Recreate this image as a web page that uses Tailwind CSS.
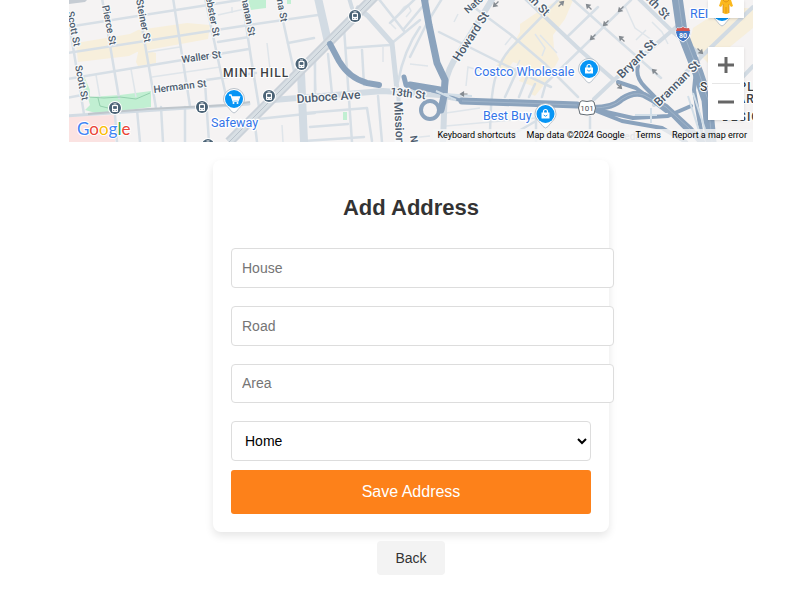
<!DOCTYPE html>
<html lang="en">
<head>
<meta charset="utf-8">
<meta name="viewport" content="width=device-width, initial-scale=1">
<title>Add Address</title>
<script src="https://cdn.jsdelivr.net/npm/@tailwindcss/browser@4"></script>
</head>
<body class="bg-white font-['Liberation_Sans',Arial,sans-serif]">
<main class="pl-[69px] pr-11">
  <section aria-label="Map" class="relative h-[142px] overflow-hidden bg-[#f5f3f3] font-[Roboto,sans-serif]">
    <svg class="block h-full w-full" viewBox="69 0 684 142" preserveAspectRatio="xMidYMid slice" fill="none">
      <defs>
        <g id="transit">
          <circle r="7" fill="#fff"/><circle r="6" fill="#4b6376"/>
          <path d="M-2.500-2.500h5v6h-5zM-1.500-4h3" stroke="#fff" stroke-width="1" fill="#fff"/>
          <path d="M-1.500-1.500h3v2h-3zM-1.800 2.500h1M.8 2.500h1" stroke="#4b6376" stroke-width=".8" fill="#4b6376"/>
        </g>
        <g id="pin">
          <path d="M0-10.500a10.500 10.500 0 0 1 10.500 10.500c0 5-5 8-8 12.500q-2.500 3-5 0c-3-4.500-8-7.500-8-12.500a10.500 10.500 0 0 1 10.500-10.500z" fill="#fff" stroke="#aab4be" stroke-width=".8"/>
          <circle r="9" fill="#0795f5"/>
        </g>
        <g id="bag">
          <path d="M-4-1.500h8v6h-8z" fill="#fff"/><path d="M-2-1v-1.500a2 2 0 0 1 4 0v1.500" stroke="#fff" stroke-width="1.200"/>
          <path d="M-1.800 1q1.800 2.500 3.600 0" stroke="#0795f5" stroke-width=".9"/>
        </g>
        <path id="arrow" d="M-3.500 0h7M-3.500 0l3-2v4z" stroke="#858b91" fill="#858b91" stroke-width="1.200"/>
      </defs>
      <!-- commercial areas, parks and hospital -->
      <g fill="#f7efdc">
        <path d="M76 43l54-9 8-4 49-7 23 2-2 14-71 13-8 4-51 6z"/>
        <path d="M139 48l17 5v10l-18 3-2-4z"/>
        <path d="M520 24l25-17 18-9h11l-9 21-12 16 1 14 5 10-8 15-8 12-8 10-4-2 4-7-16-6 10-13-16-6-9 12-8-8 18-23 6-11z"/>
        <path d="M693 28l31-20h29v20l-44 36-20-20z"/>
      </g>
      <g fill="#c1efd2">
        <path d="M84 76l6 14v7l15-1 15-1 31-4v16l-52 7-14-4 5-5-2-7-5-2z"/>
        <path d="M248 0h18v8l-15 2zM287 0h4v4h-4zM343 112h4v8h-4z"/>
      </g>
      <path d="M69 117l45-2 1 27H69z" fill="#fbe3e2"/>
      <path d="M69 0h18l-2 2-16 2z" fill="#c6ccd3"/>
      <!-- minor lanes -->
      <g stroke="#dfe5ea" stroke-width="1.500">
        <path d="M96 75l4 23M131 69l5 28M152 77l68-10M148 52l32-5M218 15l31-7M232 7v6"/>
        <path d="M267 43l3 26M282 125l1 17M314 60l2 30M383 47v15M398 15l6-8 4-2 3 6-5 6M391 24l5 5"/>
        <path d="M466 86l2-19 13 4M505 45l8-10M535 34l10 14-3 8M520 60l-6 12M410 64l18 2M458 14l-4 8M540 35l17 18"/>
        <path d="M625 6l10 22 17 12M652 22l10 10 6 12M636 40l10-10M446 113l34-5M446 126l90-8M410 138l20-2"/>
      </g>
      <!-- streets -->
      <g stroke="#d7dfe6" stroke-width="2.500" stroke-linecap="round" stroke-linejoin="round">
        <path d="M67 27L176 10l70-11M67 53l182-28 69-10M67 79l85-14 97-16M67 98l15-3M206 80l50-7M218 42l31-5M288 43l26-5"/>
        <path d="M67 10l17 104M102-2l17 100M137-2l19 110M173-2l17 108M205-2l17 80 5 22M205 83l4 59M137 110l3 32M115 115l2 27M161 107l2 35M185 107v35"/>
        <path d="M242-2l9 60 9 55M278-2l16 73M315 55v38M328 54l4 40M362 50l2 35M344 28l8 114M347 48l43-3"/>
        <path d="M258 119l57-6M306 113l61-5 5 33M310 127l38-3M304 141l60-4M378 96l4 46M255 125l2 17"/>
        <path d="M392 43l28-23M378-2l26 33M403 30l25-30M390 23l26-25M420 27q-16 23-22 55M410 57l17-34 16-26"/>
        <path d="M475 8l35 26 34 29 34 34M439 32l62 31 50 24M571-2l90 80M560-2l-50 51q-9 10-12 22-8 15-8 71"/>
        <path d="M631 0l-47 46-38 37-4 14M598 7l-32 31M505 97l12-26M519 97l8-20M529 97l6-13M590 117v25M536 112v30M510 136l26-15"/>
      </g>
      <g stroke="#d2dbe3" stroke-width="4" stroke-linecap="round" stroke-linejoin="round">
        <path d="M524-3l57 54 33 29M681 23l-67 57-20 19M638-2l36 35 27 22M753 7l-52 50-47 48"/>
        <path d="M67 116l182-12" stroke-width="3"/>
        <path d="M273 100l110-9 57 4 20 4" stroke-width="6"/>
        <path d="M358 8l10 8 24 27 5 47" stroke-width="5"/><path d="M398 90l3 52"/>
        <path d="M318-2l10 44M301 73l3 69" stroke-width="8"/>
        <path d="M493-2l-34 55q-12 16-14 33l-2 56" stroke-width="6"/>
        <path d="M349-2l3 10M753 66l-32 34"/>
      </g>
      <path d="M379-8L229 142" stroke="#cbd2d9" stroke-width="10"/><path d="M379-8L229 142" stroke="#d8dfe4" stroke-width="6"/>
      <path d="M379-8L229 142" stroke="#b9c2cb" stroke-width="1"/>
      <path d="M250 102l-22 3-80 4-60 5" stroke="#bfc6cc" stroke-width="2"/>
      <!-- freeways -->
      <g stroke="#8ba3bd" stroke-linecap="round" stroke-linejoin="round">
        <path d="M330 44l9 17q10 17 28 22l12 2" stroke-width="6"/><path d="M404 77l2 8 10 3" stroke-width="5"/>
        <path d="M424-3l5 28 8 38 8 17-1 16-3 14" stroke-width="7"/>
        <path d="M410 85l30 5M462 101l115 4" stroke-width="7"/><circle cx="430" cy="110" r="9" stroke-width="4"/>
        <path d="M410 85l30 8 22 8" stroke-width="3"/>
        <path d="M593 108q20 0 29-9 12-8 22-4l22 12 24 22 12 14" stroke-width="6"/>
        <path d="M593 109l40 9 35-2 23-10M594 110l28 11 40 7 24 14M618 82l18 6 30 23M638 66q-3 11 7 21l44 45" stroke-width="4"/>
        <path d="M677-3l5 35 16 41 9 27 4 42" stroke-width="11"/>
        <path d="M696 70l-2 20 9 52" stroke-width="4"/>
      </g>
      <path d="M678-3l5 35 16 41 9 27 4 42M593 108q20 0 29-9 12-8 22-4l22 12 24 22M462 101l115 4" stroke="#a0b4c9" stroke-width="1"/>
      <g stroke="#d3dfe8" stroke-width="2"><path d="M635 115h22M651 108v15M688 96l12 38M693 93l12 36M436 91l20 9M444 94l28 2"/></g>
      <path d="M89 97l15 1 16-1 16 2 14-6M98 98l2 8 8 2" stroke="#89c8a4" stroke-width=".8"/>
      <use href="#arrow" x="464" y="94"/><use href="#arrow" transform="translate(496 4) rotate(-45)"/><use href="#arrow" transform="translate(561 4) rotate(135)"/>
      <use href="#arrow" transform="translate(589 7) rotate(45)"/><use href="#arrow" transform="translate(621 9) rotate(-45)"/><use href="#arrow" transform="translate(606 23) rotate(-45)"/>
      <use href="#arrow" transform="translate(593 37) rotate(-45)"/><use href="#arrow" transform="translate(622 39) rotate(45)"/><use href="#arrow" transform="translate(655 72) rotate(45)"/><use href="#arrow" transform="translate(619 86) rotate(225)"/><use href="#arrow" transform="translate(700 51) rotate(225)"/>
      <!-- street names -->
      <g fill="#4c5b6d" stroke="#f8f9fa" stroke-width="2.500" paint-order="stroke" stroke-linejoin="round" font-family="Roboto,sans-serif" font-size="10" font-weight="500">
        <text transform="translate(67 12) rotate(79)">Scott St</text>
        <text transform="translate(75 66) rotate(79)">Scott St</text>
        <text transform="translate(102 6) rotate(79)">Pierce St</text>
        <text transform="translate(136 0) rotate(79)">Steiner St</text>
        <text transform="translate(204 -11) rotate(79)">Webster St</text>
        <text transform="translate(238 -19) rotate(79)">Buchanan St</text>
        <text transform="translate(273 -22) rotate(80)">Laguna St</text>
        <text transform="translate(182 63) rotate(-8)">Waller St</text>
        <text transform="translate(154 93) rotate(-7)">Hermann St</text>
        <text transform="translate(468 14) rotate(-42)">Natoma St</text>
        <text transform="translate(410 136) rotate(82)">Natoma</text>
        <text transform="translate(390 95) rotate(7)" font-size="11">13th St</text>
        <g font-size="12">
          <text transform="translate(297 103) rotate(-4)">Duboce Ave</text>
          <text transform="translate(394 102) rotate(87)">Mission St</text>
          <text transform="translate(459 62) rotate(-57)">Howard St</text>
          <text transform="translate(518 -11) rotate(46)">10th St</text>
          <text transform="translate(643 -3) rotate(46)">8th St</text>
          <text transform="translate(622 79) rotate(-45)">Bryant St</text>
          <text transform="translate(659 107) rotate(-45)">Brannan St</text>
        </g>
        <text x="601" y="140" fill="#a4adb5" stroke="none">Alameda St</text>
      </g>
      <g fill="#3c4043" stroke="#fff" stroke-width="2" paint-order="stroke" font-family="Roboto,sans-serif" font-size="12" font-weight="500">
        <text x="223" y="77" class="tracking-[1px]">MINT HILL</text>
        <text x="700" y="91" class="tracking-[1px]">SHOWPLACE</text>
        <text x="711" y="103" class="tracking-[1px]">SQUARE</text>
        <text x="722" y="121" class="tracking-[1px]">DESIGN</text>
      </g>
      <use href="#transit" x="355" y="16"/><use href="#transit" x="301.500" y="64"/><use href="#transit" x="269" y="96"/><use href="#transit" x="202" y="107"/><use href="#transit" x="115" y="108"/><use href="#transit" x="208" y="145"/>
      <use href="#pin" x="234" y="99"/>
      <path d="M229 95h2l2 6h5l1.500-4h-8" stroke="#fff" stroke-width="1.300"/><path d="M232 97h7l-1 3h-5z" fill="#fff"/><circle cx="233.500" cy="103" r="1" fill="#fff"/><circle cx="237.500" cy="103" r="1" fill="#fff"/>
      <use href="#pin" x="589" y="69"/><use href="#bag" x="589" y="69"/>
      <use href="#pin" x="545.500" y="114"/><use href="#bag" x="545.500" y="114"/>
      <use href="#pin" x="722" y="12"/>
      <g fill="#3575e8" stroke="#fff" stroke-width="2.500" paint-order="stroke" stroke-linejoin="round" font-family="Roboto,sans-serif" font-size="12.500">
        <text x="211" y="127">Safeway</text><text x="474" y="76">Costco Wholesale</text><text x="483" y="120">Best Buy</text><text x="690" y="18">REI</text>
      </g>
      <path d="M580 102q2-2 4-1 3 1 6 0 2-1 4 1 3 6 0 12-7 2-14 0-3-6 0-12z" fill="#fff" stroke="#626b73"/>
      <text x="587" y="111" text-anchor="middle" fill="#4b5157" font-family="Roboto,sans-serif" font-size="8">101</text>
      <path d="M677 28q3 1 6-1 3 2 6 1 3 4 0 9-2 3-6 5-4-2-6-5-3-5 0-9z" fill="#4174c4" stroke="#fff"/>
      <path d="M677 28q3 1 6-1 3 2 6 1l1 3h-14z" fill="#d5554f"/>
      <text x="683" y="38" text-anchor="middle" fill="#fff" font-family="Roboto,sans-serif" font-size="7" font-weight="700">80</text>
    </svg>

    <a href="#google" aria-label="Google" class="absolute bottom-px left-2 h-5">
      <svg class="block h-5 w-[54px]" viewBox="0 0 54 20"><text x="0" y="14" font-family="Lato,sans-serif" font-size="17" font-weight="400" stroke="#fff" stroke-width="2" paint-order="stroke"><tspan fill="#4285f4">G</tspan><tspan fill="#ea4335">o</tspan><tspan fill="#fbbc04">o</tspan><tspan fill="#4285f4">g</tspan><tspan fill="#34a853">l</tspan><tspan fill="#ea4335">e</tspan></text></svg>
    </a>

    <button type="button" aria-label="Street View" class="absolute right-[9px] top-0 flex h-[18px] w-9 items-end justify-center bg-white pb-1 shadow-sm">
      <svg class="h-[14px] w-4" viewBox="0 0 16 14"><path d="M3 0h10l2 6-2 1-2-3v9q-3 2-6 0V4L3 7 1 6z" fill="#fbb81c"/><path d="M8 7v6M5 0q3 4 6 0M5 4v9M11 4v9" stroke="#d98d14" stroke-width=".8" fill="none"/></svg>
    </button>
    <div class="absolute right-[9px] top-[47px] w-9 bg-white shadow-sm">
      <button type="button" aria-label="Zoom in" class="flex h-9 w-full items-center justify-center"><svg class="size-4" viewBox="0 0 16 16"><path d="M8 0v16M0 8h16" stroke="#666" stroke-width="3"/></svg></button>
      <div class="mx-1 h-px bg-[#e6e6e6]"></div>
      <button type="button" aria-label="Zoom out" class="flex h-9 w-full items-center justify-center"><svg class="size-4" viewBox="0 0 16 16"><path d="M0 8h16" stroke="#666" stroke-width="3"/></svg></button>
    </div>
    <div class="absolute bottom-0 right-0 flex h-[13px] items-center gap-[11px] bg-[#f5f5f5]/80 pl-1 pr-[6px] text-[9px] leading-[13px] text-black">
      <button type="button">Keyboard shortcuts</button><span>Map data ©2024 Google</span><a href="#terms">Terms</a><a href="#report">Report a map error</a>
    </div>
  </section>

  <div class="mx-auto mt-[18px] max-w-[396px] rounded-lg bg-white px-[18px] pb-[18px] pt-[34px] shadow-[0_4px_8px_rgba(0,0,0,0.1)]">
    <h2 class="mb-[26px] text-center text-[22px] font-bold leading-7 text-[#333]">Add Address</h2>
    <form>
      <div class="mb-[9px] flex flex-col gap-[18px] text-[14px]">
        <div class="flex h-10"><label for="house" class="sr-only">House</label><input id="house" type="text" placeholder="House" class="w-[calc(100%+23px)] shrink-0 rounded border border-[#ddd] bg-white px-[10px] placeholder:text-[#757575]"></div>
        <div class="flex h-10"><label for="road" class="sr-only">Road</label><input id="road" type="text" placeholder="Road" class="w-[calc(100%+23px)] shrink-0 rounded border border-[#ddd] bg-white px-[10px] placeholder:text-[#757575]"></div>
        <div class="flex h-[39px]"><label for="area" class="sr-only">Area</label><input id="area" type="text" placeholder="Area" class="w-[calc(100%+23px)] shrink-0 rounded border border-[#ddd] bg-white px-[10px] placeholder:text-[#757575]"></div>
        <div class="flex h-10"><label for="type" class="sr-only">Address type</label><select id="type" class="w-full rounded border border-[#ddd] bg-white pl-[9px] text-black"><option>Home</option><option>Work</option><option>Other</option></select></div>
      </div>
      <button type="submit" class="block h-11 w-full rounded-[3px] bg-[#fd811a] text-[16px] text-white">Save Address</button>
    </form>
  </div>
  <div class="mt-[9px] flex justify-center"><button type="button" class="h-[34px] rounded bg-[#f3f3f3] px-[18px] text-[14px] text-[#333]">Back</button></div>
</main>
</body>
</html>
